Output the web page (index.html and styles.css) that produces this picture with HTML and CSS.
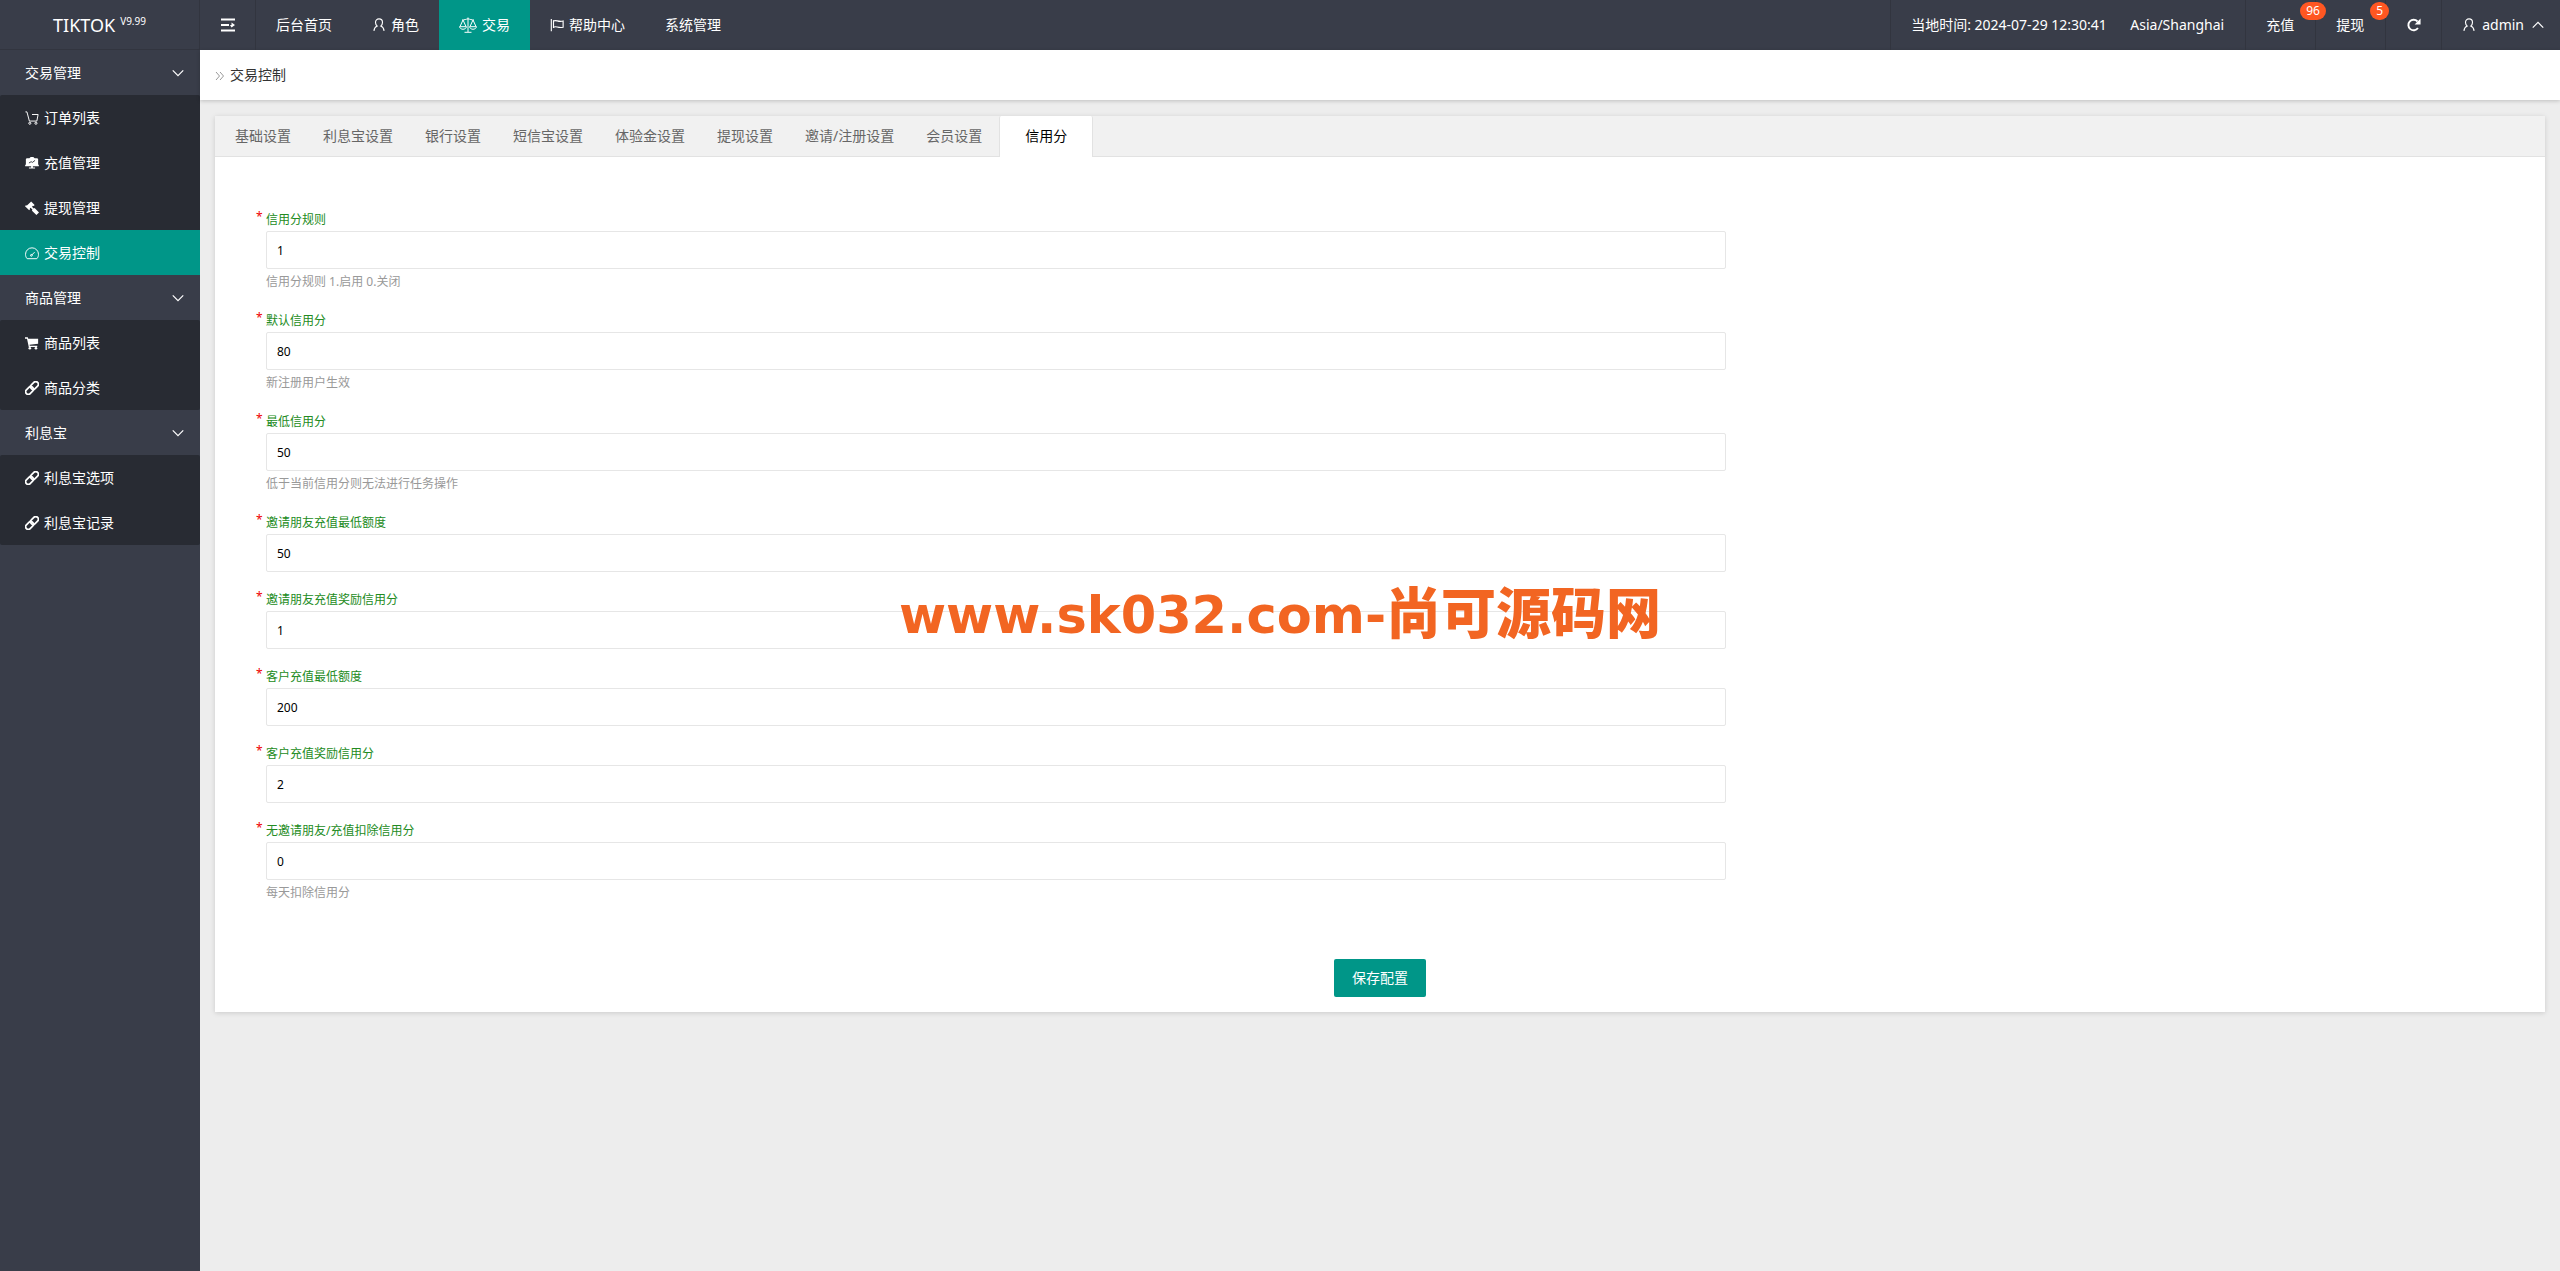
FILE: index.html
```html
<!DOCTYPE html>
<html lang="zh-CN">
<head>
<meta charset="utf-8">
<title>交易控制</title>
<link rel="stylesheet" href="styles.css">
</head>
<body>
<svg class="sprite" aria-hidden="true">
  <symbol id="i-user" viewBox="0 0 16 16"><path d="M8 1a4 4 0 0 1 4 4c0 2-1 3.300-2 4.200 2 .8 3.500 2.500 3.800 5.500M8 1a4 4 0 0 0-4 4c0 2 1 3.300 2 4.200-2 .8-3.500 2.500-3.800 5.500"/></symbol>
  <symbol id="i-down" viewBox="0 0 16 16"><path d="M1 4.500 8 11.500 15 4.500"/></symbol>
  <symbol id="i-up" viewBox="0 0 16 16"><path d="M1 11.500 8 4.500 15 11.500"/></symbol>
  <symbol id="i-link" viewBox="0 0 16 16"><g transform="rotate(-45 8 8)" stroke-width="2"><rect x="-1" y="5" width="10" height="6" rx="3"/><rect x="7" y="5" width="10" height="6" rx="3"/></g></symbol>
</svg>
<div class="layout">
  <aside class="side">
    <a class="logo" href="#">TIKTOK <sup>V9.99</sup></a>
    <nav class="menu">
      <button class="menu-group" type="button">交易管理<svg class="caret"><use href="#i-down"/></svg></button>
      <div class="menu-items">
        <a href="#"><svg class="icon thin" viewBox="0 0 16 16"><path d="M.5 1h1.700l2.800 10.500h8.500l1.500-7.500H8"/><circle cx="5.500" cy="14" r="1.200"/><circle cx="12.500" cy="14" r="1.200"/></svg>订单列表</a>
        <a href="#"><svg class="icon solid" viewBox="0 0 16 16"><path d="M1 3.500 2 2.500h3L6.500 1h3L11 2.500h3l1 1V10h.8v1.800H9V13h2.500v1.200h-7V13H7v-1.200H.2V10H1z"/><path class="spark" d="M4.500 8 7 6.500l1.500.8 3-2.300"/></svg>充值管理</a>
        <a href="#"><svg class="icon solid" viewBox="0 0 16 16"><path d="M7 .5 11 4.500 10 5.800 9 5.500 8 6.500l2 2 1-.5 5 5-3 3-5-5 .4-1.200-2-2L5.500 8.500l.2 1L4.800 10.700 0 6l1-1.200 1.200.2 4-3.600z"/></svg>提现管理</a>
        <a class="active" href="#"><svg class="icon thin" viewBox="0 0 16 16"><path d="M2.500 14.500C1.200 13.200.6 11.500.6 9.500a7.400 7.400 0 0 1 14.800 0c0 2-.6 3.700-1.900 5zM7.500 10.500 11 7"/><circle cx="7.300" cy="10.700" r="1"/></svg>交易控制</a>
      </div>
      <button class="menu-group" type="button">商品管理<svg class="caret"><use href="#i-down"/></svg></button>
      <div class="menu-items">
        <a href="#"><svg class="icon solid" viewBox="0 0 16 16"><path d="M0 1.500h3.200L3.700 3H15v5.800l-9.800 1.200.3 1.200H14v1.300H4.300L2.300 3H0z"/><circle cx="5.500" cy="14" r="1.500"/><circle cx="12.500" cy="14" r="1.500"/></svg>商品列表</a>
        <a href="#"><svg class="icon"><use href="#i-link"/></svg>商品分类</a>
      </div>
      <button class="menu-group" type="button">利息宝<svg class="caret"><use href="#i-down"/></svg></button>
      <div class="menu-items">
        <a href="#"><svg class="icon"><use href="#i-link"/></svg>利息宝选项</a>
        <a href="#"><svg class="icon"><use href="#i-link"/></svg>利息宝记录</a>
      </div>
    </nav>
  </aside>
  <div class="main">
    <header class="topbar">
      <button class="toggle" type="button" aria-label="菜单"><svg class="icon" viewBox="0 0 14 14"><path class="bars" d="M0 1.500h14M0 7h8M0 12.500h14"/><path class="fill" d="M9 7h1.500V4.500L14 7l-3.500 2.500z"/></svg></button>
      <nav class="topnav">
        <a href="#">后台首页</a>
        <a href="#"><svg class="icon"><use href="#i-user"/></svg>角色</a>
        <a class="active" href="#"><svg class="icon wide" viewBox="0 0 18 16"><path d="M9 .5V15M5.500 15.300h7M3 3c2.500 0 4-.8 6-1.200C11 2.200 12.500 3 15 3M4 3 1 9.500M4 3l3 6.500M14 3l-3 6.500M14 3l3 6.500M.6 9.700h6.800c-.3 3.400-6.500 3.400-6.800 0zM10.600 9.700h6.800c-.3 3.400-6.500 3.400-6.800 0z"/></svg>交易</a>
        <a href="#"><svg class="icon" viewBox="0 0 16 16"><path d="M1.500 1v14M4 3.500c3-2 5 1.500 11 0v7c-6 1.500-8-2-11 0M4 2.500v9"/></svg>帮助中心</a>
        <a href="#">系统管理</a>
      </nav>
      <div class="status">
        <div class="clock"><span>当地时间: 2024-07-29 12:30:41</span><span>Asia/Shanghai</span></div>
        <a class="notice" href="#">充值<span class="badge">96</span></a>
        <a class="notice" href="#">提现<span class="badge">5</span></a>
        <button class="refresh" type="button" aria-label="刷新"><svg class="icon" viewBox="0 0 16 16"><path d="M12.500 11.500A6 6 0 1 1 12 4" stroke-width="2.200"/><path class="fill" d="M15.500.5v6.800H8.700z"/></svg></button>
        <a class="account" href="#"><svg class="icon"><use href="#i-user"/></svg>admin<svg class="caret"><use href="#i-up"/></svg></a>
      </div>
    </header>
    <div class="crumb"><svg class="chevrons" viewBox="0 0 10 10"><path d="M1 1l3.500 4L1 9M5 1l3.500 4L5 9"/></svg>交易控制</div>
    <section class="card">
      <nav class="tabs">
        <a href="#">基础设置</a>
        <a href="#">利息宝设置</a>
        <a href="#">银行设置</a>
        <a href="#">短信宝设置</a>
        <a href="#">体验金设置</a>
        <a href="#">提现设置</a>
        <a href="#">邀请/注册设置</a>
        <a href="#">会员设置</a>
        <a class="active" href="#">信用分</a>
      </nav>
      <form class="form">
        <div class="fields">
          <div class="field"><label for="f1">信用分规则</label><input id="f1" type="text" value="1"><p>信用分规则 1.启用 0.关闭</p></div>
          <div class="field"><label for="f2">默认信用分</label><input id="f2" type="text" value="80"><p>新注册用户生效</p></div>
          <div class="field"><label for="f3">最低信用分</label><input id="f3" type="text" value="50"><p>低于当前信用分则无法进行任务操作</p></div>
          <div class="field"><label for="f4">邀请朋友充值最低额度</label><input id="f4" type="text" value="50"></div>
          <div class="field"><label for="f5">邀请朋友充值奖励信用分</label><input id="f5" type="text" value="1"></div>
          <div class="field"><label for="f6">客户充值最低额度</label><input id="f6" type="text" value="200"></div>
          <div class="field"><label for="f7">客户充值奖励信用分</label><input id="f7" type="text" value="2"></div>
          <div class="field"><label for="f8">无邀请朋友/充值扣除信用分</label><input id="f8" type="text" value="0"><p>每天扣除信用分</p></div>
        </div>
        <button class="save" type="button">保存配置</button>
      </form>
    </section>
  </div>
</div>
<div class="watermark">www.sk032.com-<span>尚可源码网</span></div>
</body>
</html>
```
FILE: styles.css
```css
* { box-sizing: border-box; }
body {
  margin: 0;
  background: #ededed;
  color: #333;
  font: 14px/20px "Noto Sans", "Noto Sans CJK SC", sans-serif;
}
a { color: inherit; text-decoration: none; }
button, input { font: inherit; color: inherit; border: 0; }
button { background: none; padding: 0; cursor: pointer; }
p { margin: 0; }
svg { fill: none; stroke: currentColor; stroke-width: 1.3; }
.sprite { display: none; }
.icon { width: 14px; height: 14px; flex: none; }
.icon.wide { width: 18px; height: 16px; stroke-width: 1; }
.icon.thin { stroke-width: 1.1; }
.icon.solid, .fill { fill: currentColor; stroke: none; }
.icon .spark { fill: none; stroke: #282b33; stroke-width: 1; }
.bars { stroke-width: 2; }
.caret { width: 12px; height: 12px; flex: none; stroke-width: 1.6; }

.layout { display: grid; grid-template-columns: 200px 1fr; min-height: 100vh; }
.side { background: #393d49; color: #fff; }
.logo {
  display: flex;
  justify-content: center;
  align-items: center;
  gap: 5px;
  height: 50px;
  border-bottom: 1px solid #32353f;
  border-right: 1px solid #32353f;
  font-size: 18px;
}
.logo sup { font-size: 10px; line-height: 12px; margin-bottom: 8px; vertical-align: baseline; }
.menu-group {
  display: flex;
  width: 100%;
  height: 45px;
  padding: 0 16px 0 25px;
  justify-content: space-between;
  align-items: center;
}
.menu-items { background: #282b33; border-radius: 2px; }
.menu-items a { display: flex; align-items: center; gap: 5px; height: 45px; padding-left: 25px; }
.active { background: #009688; }

.main { min-width: 0; }
.topbar { display: flex; height: 50px; background: #393d49; color: #fff; }
.topbar a, .clock { display: flex; align-items: center; }
.toggle {
  display: flex;
  justify-content: center;
  align-items: center;
  width: 56px;
  border-right: 1px solid #32353f;
}
.topnav { display: flex; }
.topnav a { gap: 5px; padding: 0 20px; }
.status { display: flex; margin-left: auto; }
.status > * { border-left: 1px solid #32353f; }
.clock { gap: 16px; min-width: 355px; justify-content: space-between; padding: 0 21px 0 20px; }
.notice { position: relative; padding: 0 21px 0 20px; }
.badge {
  position: absolute;
  top: 2px;
  left: 54px;
  z-index: 1;
  height: 18px;
  padding: 0 6px;
  border-radius: 9px;
  background: #ff5722;
  font-size: 12px;
  line-height: 18px;
}
.refresh { display: flex; justify-content: center; align-items: center; width: 56px; }
.account { gap: 6px; padding: 0 16px 0 20px; }
.account .caret { margin-left: 2px; }

.crumb {
  display: flex;
  align-items: center;
  gap: 5px;
  height: 50px;
  padding-left: 15px;
  background: #fff;
  box-shadow: 0 1px 4px rgba(0, 0, 0, .2);
}
.chevrons { width: 10px; height: 10px; color: #999; stroke-width: 1; margin-top: 2px; }

.card { margin: 16px 15px 0; background: #fff; box-shadow: 0 1px 5px rgba(0, 0, 0, .15); }
.tabs {
  display: flex;
  gap: 2px;
  height: 41px;
  padding-left: 5px;
  background: #f1f1f1;
  border-bottom: 1px solid #e2e2e2;
  color: #666;
}
.tabs a { height: 40px; padding: 0 15px; line-height: 40px; }
.tabs .active {
  height: 41px;
  padding: 0 25px;
  background: #fff;
  color: #000;
  border: 1px solid #e2e2e2;
  border-width: 0 1px;
  border-radius: 2px 2px 0 0;
}
.form { display: flex; flex-direction: column; align-items: center; padding: 50px 51px 15px; }
.fields { display: grid; width: 100%; grid-template-columns: 19fr 10fr; row-gap: 15px; }
.field { grid-column: 1; display: flex; flex-direction: column; font-size: 12px; }
.field label { position: relative; height: 24px; line-height: 26px; color: #228b22; }
.field label::before { content: "*"; position: absolute; left: -10px; top: -3px; color: #e00; }
.field input {
  height: 38px;
  padding: 0 10px;
  border: 1px solid #e6e6e6;
  border-radius: 2px;
  background: #fff;
  color: #000;
}
.field p { height: 24px; line-height: 26px; color: #999; }
.save {
  width: 92px;
  height: 38px;
  margin-top: 55px;
  border-radius: 2px;
  background: #009688;
  color: #fff;
}
.watermark {
  position: fixed;
  top: 50%;
  left: 50%;
  transform: translate(-50%, -50%);
  margin-top: -24px;
  color: #f26522;
  font: bold 51px/60px "DejaVu Sans", "Noto Sans CJK SC", sans-serif;
  white-space: nowrap;
  pointer-events: none;
}
.watermark span { font-size: 55px; font-weight: 900; font-family: "Noto Sans CJK SC", sans-serif; }
```
